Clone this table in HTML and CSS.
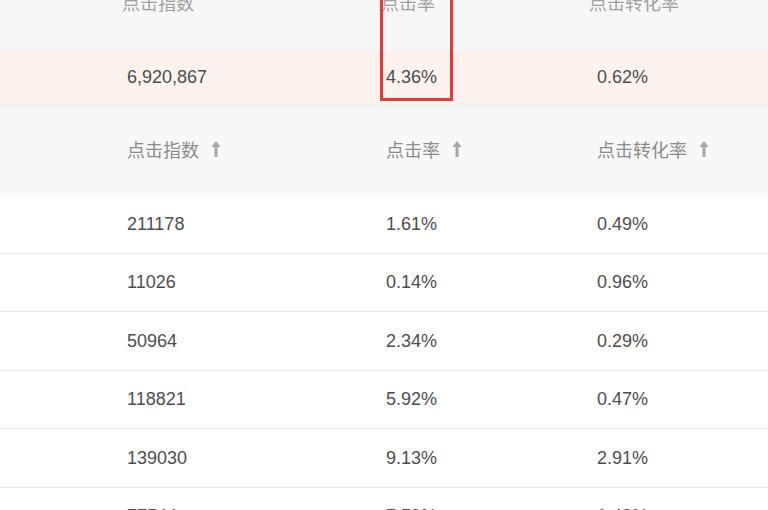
FILE: index.html
```html
<!DOCTYPE html>
<html lang="zh-CN">
<head>
<meta charset="utf-8">
<title>点击数据</title>
<link rel="stylesheet" href="styles.css">
</head>
<body>
<div class="table">
  <div class="row top-head">
    <div class="cell"><span class="lift">点击指数</span></div>
    <div class="cell"><span class="lift">点击率</span></div>
    <div class="cell"><span class="lift">点击转化率</span></div>
  </div>
  <div class="row summary">
    <div class="cell">6,920,867</div>
    <div class="cell">4.36%</div>
    <div class="cell">0.62%</div>
  </div>
  <div class="highlight"></div>
  <div class="row sort-head">
    <div class="cell">点击指数<svg class="arrow" viewBox="0 0 10 18"><path d="M5 1 L9.5 7 H6.5 V17 H3.5 V7 H0.5 Z"/></svg></div>
    <div class="cell">点击率<svg class="arrow" viewBox="0 0 10 18"><path d="M5 1 L9.5 7 H6.5 V17 H3.5 V7 H0.5 Z"/></svg></div>
    <div class="cell">点击转化率<svg class="arrow" viewBox="0 0 10 18"><path d="M5 1 L9.5 7 H6.5 V17 H3.5 V7 H0.5 Z"/></svg></div>
  </div>
  <div class="row data"><div class="cell">211178</div><div class="cell">1.61%</div><div class="cell">0.49%</div></div>
  <div class="row data"><div class="cell">11026</div><div class="cell">0.14%</div><div class="cell">0.96%</div></div>
  <div class="row data"><div class="cell">50964</div><div class="cell">2.34%</div><div class="cell">0.29%</div></div>
  <div class="row data"><div class="cell">118821</div><div class="cell">5.92%</div><div class="cell">0.47%</div></div>
  <div class="row data"><div class="cell">139030</div><div class="cell">9.13%</div><div class="cell">2.91%</div></div>
  <div class="row data"><div class="cell">77544</div><div class="cell">7.59%</div><div class="cell">1.49%</div></div>
</div>
</body>
</html>
```

FILE: styles.css
```css
html, body {
  margin: 0;
  padding: 0;
  background: #ffffff;
}
body {
  font-family: "Liberation Sans", "Noto Sans CJK SC", sans-serif;
  font-size: 18px;
  color: #4d4d4d;
  overflow: hidden;
}
.table {
  position: relative;
  width: 768px;
}
.row {
  display: grid;
  grid-template-columns: 259px 211px 1fr;
  padding-left: 127px;
  align-items: center;
  box-sizing: border-box;
}
.top-head {
  height: 51px;
  background: #f7f7f7;
  grid-template-columns: 259px 208px 1fr;
  padding-left: 122px;
  align-items: start;
  color: #a0a0a0;
}
.lift {
  display: block;
  line-height: 18px;
  margin-top: -5px;
}
.summary {
  height: 55px;
  background: #fcf3ee;
  border-bottom: 1px solid #eeeeea;
  padding-bottom: 1px;
}
.sort-head {
  height: 89px;
  background: #f7f8f8;
  color: #8c8c8c;
  padding-bottom: 3px;
}
.sort-head .cell {
  display: flex;
  align-items: center;
}
.arrow {
  width: 10px;
  height: 18px;
  margin-left: 12px;
  fill: #a6a6a6;
}
.data {
  height: 58.5px;
  border-bottom: 1px solid #e9e9e9;
  padding-top: 1px;
}
.highlight {
  position: absolute;
  left: 380px;
  top: -4px;
  width: 73px;
  height: 105px;
  border: 3px solid #e23a3f;
  box-sizing: border-box;
}
```
